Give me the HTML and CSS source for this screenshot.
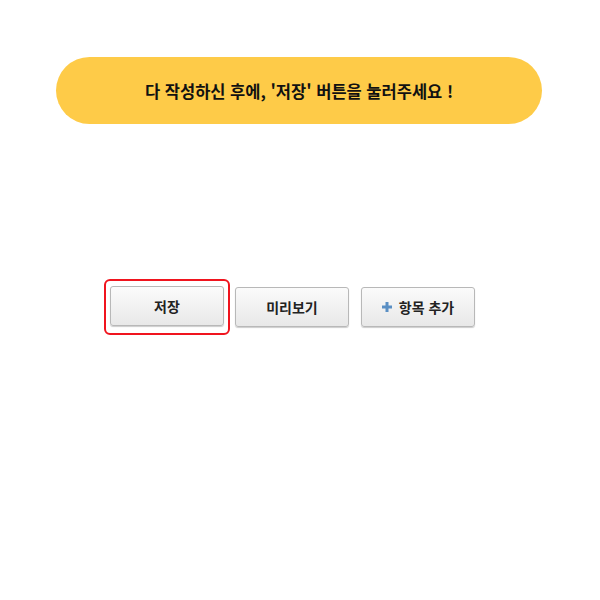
FILE: index.html
```html
<!DOCTYPE html>
<html lang="ko">
<head>
  <meta charset="UTF-8" />
  <meta name="viewport" content="width=device-width, initial-scale=1.0"/>
  <title>작성 안내</title>
  <link rel="stylesheet" href="styles.css">
</head>
<body>
  <div class="notice">다 작성하신 후에, '저장' 버튼을 눌러주세요 !</div>
  <div class="actions">
    <div class="highlight">
      <button class="btn">저장</button>
    </div>
    <button class="btn">미리보기</button>
    <button class="btn">
      <svg class="plus" width="10" height="10" viewBox="0 0 10 10"><path d="M3.5 0h3v3.5H10v3H6.5V10h-3V6.5H0v-3h3.5z" fill="#5a8fc4"/></svg>
      항목 추가
    </button>
  </div>
</body>
</html>
```

FILE: styles.css
```css
body { margin: 0; background: #fff; font-family: "Noto Sans CJK KR", "Noto Sans", sans-serif; }
.notice { width: 486px; height: 67px; margin: 57px 0 0 56px; background: #fecb48; border-radius: 34px; display: flex; align-items: center; justify-content: center; font-size: 16.5px; font-weight: 700; color: #111; }
.actions { display: flex; align-items: center; margin: 155px 0 0 104px; }
.highlight { border: 2px solid #f0141e; border-radius: 6px; padding: 5px 4px 7px; margin-right: 5px; }
.btn { width: 114px; height: 40px; display: flex; align-items: center; justify-content: center; gap: 5px; border: 1px solid #b8b8b8; border-radius: 3px; background: linear-gradient(#fbfbfb, #e8e8e8); box-shadow: 0 1px 1px rgba(0,0,0,0.2); font-family: inherit; font-size: 14px; font-weight: 700; color: #222; padding: 0; }
.actions > .btn + .btn { margin-left: 12px; }
.plus { margin-right: 2px; }
```
